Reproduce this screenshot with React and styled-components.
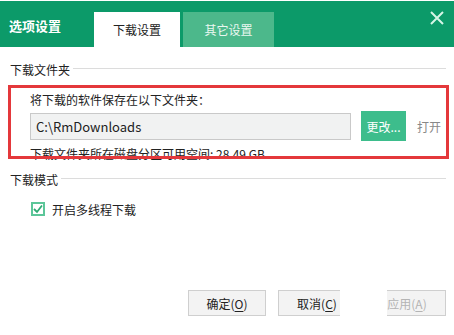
import styled, { createGlobalStyle } from "styled-components";

const GlobalStyle = createGlobalStyle`
  html, body {
    margin: 0;
    padding: 0;
    background: #fff;
  }
  body {
    font-family: "Microsoft YaHei", "Noto Sans CJK SC", sans-serif;
    font-size: 12px;
    color: #222;
  }
`;

const Window = styled.div`
  position: relative;
  width: 454px;
  height: 335px;
  background: #fff;
  padding-top: 1px;
  box-sizing: border-box;
  overflow: hidden;
`;

const TitleBar = styled.div`
  display: flex;
  align-items: flex-end;
  height: 46px;
  background: #0c9a69;
  padding-left: 9px;
`;

const Title = styled.div`
  align-self: center;
  width: 85px;
  color: #fff;
  font-size: 13px;
  font-weight: bold;
  margin-top: 2px;
`;

const Tab = styled.div`
  display: flex;
  align-items: center;
  justify-content: center;
  width: ${(p) => p.width}px;
  height: 35px;
  margin-right: 3px;
  background: ${(p) => (p.active ? "#fff" : "#4cb88b")};
  color: ${(p) => (p.active ? "#222" : "#e9f7f0")};
  font-size: 12px;
`;

const Close = styled.div`
  align-self: flex-start;
  margin: 10px 10px 0 auto;
  width: 14px;
  height: 14px;
`;

const Body = styled.div`
  padding: 13px 5px 0 10px;
`;

const SectionHead = styled.div`
  display: flex;
  align-items: center;
  gap: 3px;
  height: 18px;
  margin-right: 3px;
  font-size: 12px;
  &::after {
    content: "";
    flex: 1;
    height: 1px;
    margin-top: -2px;
    background: #dcdcdc;
  }
`;

const Group = styled.div`
  position: relative;
  margin: 7px 0 0 -2px;
  height: 74px;
  padding: 6px 0 0 22px;
  box-sizing: border-box;
`;

const Annotation = styled.div`
  position: absolute;
  inset: 0;
  border: 3px solid #e4383b;
  pointer-events: none;
`;

const Label = styled.div`
  line-height: 17px;
`;

const PathRow = styled.div`
  display: flex;
  align-items: center;
  margin-top: 3px;
  height: 30px;
`;

const PathInput = styled.div`
  display: flex;
  align-items: center;
  width: 321px;
  height: 27px;
  box-sizing: border-box;
  padding-left: 5px;
  background: #f1f2f2;
  border: 1px solid #c9c9c9;
  font-size: 13px;
  color: #222;
`;

const GreenButton = styled.div`
  display: flex;
  align-items: center;
  justify-content: center;
  width: 45px;
  height: 30px;
  margin-left: 10px;
  background: #3dbd8c;
  color: #fff;
  font-size: 12px;
`;

const LinkText = styled.div`
  margin-left: 11px;
  color: #888;
  font-size: 12px;
`;

const Info = styled.div`
  margin-top: 4px;
  line-height: 17px;
`;

const ModeHead = styled(SectionHead)`
  margin-top: 11px;
`;

const CheckRow = styled.div`
  display: flex;
  align-items: center;
  gap: 7px;
  margin: 12px 0 0 21px;
  height: 18px;
`;

const CheckBox = styled.div`
  width: 14px;
  height: 14px;
  box-sizing: border-box;
  border: 2px solid #5cc699;
  background: #fff;
  display: flex;
  align-items: center;
  justify-content: center;
`;

const Footer = styled.div`
  position: relative;
  display: flex;
  justify-content: flex-end;
  gap: 12px;
  padding: 72px 8px 0 0;
`;

const Button = styled.div`
  display: flex;
  align-items: center;
  justify-content: center;
  width: 78px;
  height: 26px;
  box-sizing: border-box;
  background: #f3f3f3;
  border: 1px solid #cfcfcf;
  color: ${(p) => (p.disabled ? "#b4b4b4" : "#222")};
  font-size: 12px;
  u {
    text-underline-offset: 2px;
  }
`;

const Smudge = styled.div`
  position: absolute;
  left: 340px;
  top: 66px;
  width: 47px;
  height: 40px;
  background: #fff;
`;

export default function App() {
  return (
    <>
      <GlobalStyle />
      <Window>
        <TitleBar>
          <Title>选项设置</Title>
          <Tab active width={86}>下载设置</Tab>
          <Tab width={91}>其它设置</Tab>
          <Close>
            <svg width="14" height="14" viewBox="0 0 14 14">
              <path d="M1 1L13 13M13 1L1 13" stroke="#d6f5e6" strokeWidth="2" />
            </svg>
          </Close>
        </TitleBar>
        <Body>
          <SectionHead>下载文件夹</SectionHead>
          <Group>
            <Label>将下载的软件保存在以下文件夹：</Label>
            <PathRow>
              <PathInput>C:\RmDownloads</PathInput>
              <GreenButton>更改...</GreenButton>
              <LinkText>打开</LinkText>
            </PathRow>
            <Info>下载文件夹所在磁盘分区可用空间: 28.49 GB</Info>
            <Annotation />
          </Group>
          <ModeHead>下载模式</ModeHead>
          <CheckRow>
            <CheckBox>
              <svg width="10" height="10" viewBox="0 0 10 10">
                <path d="M1 5L4 8L9 1.5" fill="none" stroke="#2faa74" strokeWidth="1.8" />
              </svg>
            </CheckBox>
            开启多线程下载
          </CheckRow>
        </Body>
        <Footer>
          <Button>确定(<u>O</u>)</Button>
          <Button>取消(<u>C</u>)</Button>
          <Button disabled>应用(<u>A</u>)</Button>
          <Smudge />
        </Footer>
      </Window>
    </>
  );
}
